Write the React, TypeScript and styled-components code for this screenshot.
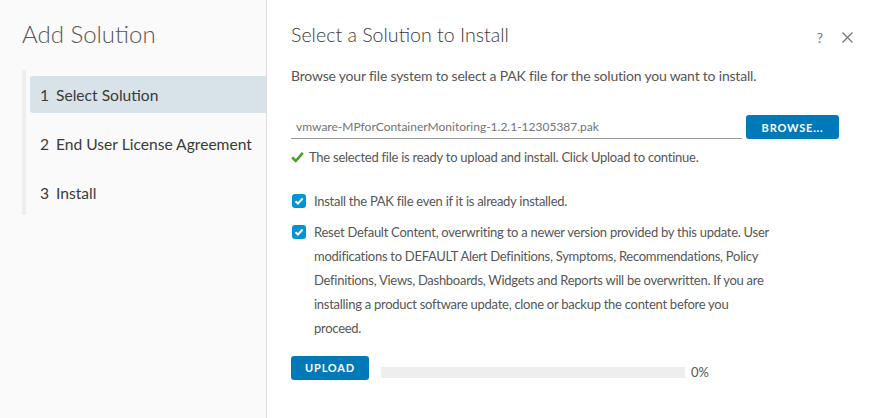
import styled, { createGlobalStyle } from "styled-components";

const GlobalStyle = createGlobalStyle`
  html, body {
    margin: 0;
    padding: 0;
    background: #ffffff;
  }
  body {
    font-family: Lato, "Liberation Sans", sans-serif;
    color: #565656;
  }
`;

const Modal = styled.div`
  width: 873px;
  height: 418px;
  display: flex;
  background: #ffffff;
  overflow: hidden;
`;

const Sidebar = styled.aside`
  width: 267px;
  flex-shrink: 0;
  background: #fafafa;
  border-right: 1px solid #dddddd;
  padding: 19px 0 0 22px;
  box-sizing: border-box;
`;

const SideTitle = styled.h2`
  margin: 0;
  font-size: 24px;
  font-weight: 300;
  color: #565656;
  line-height: 29px;
`;

const StepList = styled.ol`
  list-style: none;
  margin: 22px 0 0;
  padding: 6px 0 4px 4px;
  border-left: 4px solid #eeeeee;
  display: flex;
  flex-direction: column;
  gap: 12px;
`;

const Step = styled.li<{ $active?: boolean }>`
  height: 37px;
  display: flex;
  align-items: center;
  gap: 7px;
  padding-left: 10px;
  font-size: 15.6px;
  color: #3a3a3a;
  border-radius: 3px 0 0 3px;
  background: ${(p) => (p.$active ? "#d8e3e9" : "transparent")};
`;

const Content = styled.main`
  flex: 1;
  padding: 20px 20px 0 24px;
  box-sizing: border-box;
`;

const Header = styled.div`
  display: flex;
  align-items: center;
  justify-content: space-between;
  height: 28px;
`;

const Title = styled.h1`
  margin: 0;
  font-size: 19.6px;
  font-weight: 300;
  color: #3a3a3a;
`;

const HeaderIcons = styled.div`
  display: flex;
  align-items: center;
  gap: 19px;
  margin-top: 6px;
  color: #737373;
  font-size: 14px;
`;

const Description = styled.p`
  margin: 18px 0 0;
  font-size: 14px;
  letter-spacing: -0.2px;
  line-height: 20px;
`;

const FileRow = styled.div`
  display: flex;
  align-items: flex-end;
  gap: 4px;
  margin-top: 29px;
`;

const FileInput = styled.div`
  width: 451px;
  height: 24px;
  border-bottom: 1px solid #9a9a9a;
  padding-left: 5px;
  box-sizing: border-box;
  font-size: 12px;
  color: #737373;
  display: flex;
  align-items: center;
`;

const Button = styled.button<{ $width: number }>`
  width: ${(p) => p.$width}px;
  height: 24px;
  border: none;
  border-radius: 3px;
  background: #0079b8;
  color: #ffffff;
  font-family: Lato, "Liberation Sans", sans-serif;
  font-size: 11px;
  font-weight: 700;
  letter-spacing: 0.8px;
  padding: 0;
  cursor: pointer;
`;

const Success = styled.div`
  display: flex;
  align-items: center;
  gap: 5px;
  margin-top: 8px;
  font-size: 13px;
  letter-spacing: -0.25px;
  line-height: 20px;
`;

const Checks = styled.div`
  display: flex;
  flex-direction: column;
  gap: 7px;
  margin-top: 22px;
`;

const CheckRow = styled.label`
  display: flex;
  align-items: flex-start;
  gap: 8px;
  font-size: 13px;
  letter-spacing: -0.27px;
  line-height: 24px;
  padding-left: 1px;
`;

const CheckText = styled.span`
  max-width: 458px;
`;

const Box = styled.span`
  width: 14px;
  height: 14px;
  margin-top: 5px;
  flex-shrink: 0;
  border-radius: 3px;
  background: #0094d2;
  display: flex;
  align-items: center;
  justify-content: center;
`;

const UploadRow = styled.div`
  display: flex;
  align-items: center;
  margin-top: 15px;
`;

const Progress = styled.div`
  width: 304px;
  height: 11px;
  margin: 9px 6px 0 12px;
  background: #eeeeee;
`;

const Percent = styled.span`
  font-size: 13px;
  margin-top: 9px;
`;

const Tick = () => (
  <svg width="10" height="8" viewBox="0 0 10 8">
    <path d="M1.5 4.2 L4 6.5 L8.6 1.5" fill="none" stroke="#fff" strokeWidth="2" />
  </svg>
);

const GreenCheck = () => (
  <svg width="13" height="12" viewBox="0 0 13 12">
    <path
      d="M1.2 6.3 L4.8 10 L11.8 1.8"
      fill="none"
      stroke="#48a025"
      strokeWidth="2.6"
      strokeLinejoin="round"
    />
  </svg>
);

const CloseIcon = () => (
  <svg width="11" height="11" viewBox="0 0 11 11">
    <path d="M0.5 0.5 L10.5 10.5 M10.5 0.5 L0.5 10.5" stroke="#737373" strokeWidth="1.2" />
  </svg>
);

export default function App() {
  return (
    <>
      <GlobalStyle />
      <Modal>
        <Sidebar>
          <SideTitle>Add Solution</SideTitle>
          <StepList>
            <Step $active>
              <span>1</span>
              <span>Select Solution</span>
            </Step>
            <Step>
              <span>2</span>
              <span>End User License Agreement</span>
            </Step>
            <Step>
              <span>3</span>
              <span>Install</span>
            </Step>
          </StepList>
        </Sidebar>
        <Content>
          <Header>
            <Title>Select a Solution to Install</Title>
            <HeaderIcons>
              <span>?</span>
              <CloseIcon />
            </HeaderIcons>
          </Header>
          <Description>
            Browse your file system to select a PAK file for the solution you want to install.
          </Description>
          <FileRow>
            <FileInput>vmware-MPforContainerMonitoring-1.2.1-12305387.pak</FileInput>
            <Button $width={93}>BROWSE...</Button>
          </FileRow>
          <Success>
            <GreenCheck />
            The selected file is ready to upload and install. Click Upload to continue.
          </Success>
          <Checks>
            <CheckRow>
              <Box>
                <Tick />
              </Box>
              <CheckText>Install the PAK file even if it is already installed.</CheckText>
            </CheckRow>
            <CheckRow>
              <Box>
                <Tick />
              </Box>
              <CheckText>
                Reset Default Content, overwriting to a newer version provided by this update. User
                modifications to DEFAULT Alert Definitions, Symptoms, Recommendations, Policy
                Definitions, Views, Dashboards, Widgets and Reports will be overwritten. If you are
                installing a product software update, clone or backup the content before you
                proceed.
              </CheckText>
            </CheckRow>
          </Checks>
          <UploadRow>
            <Button $width={78}>UPLOAD</Button>
            <Progress />
            <Percent>0%</Percent>
          </UploadRow>
        </Content>
      </Modal>
    </>
  );
}
